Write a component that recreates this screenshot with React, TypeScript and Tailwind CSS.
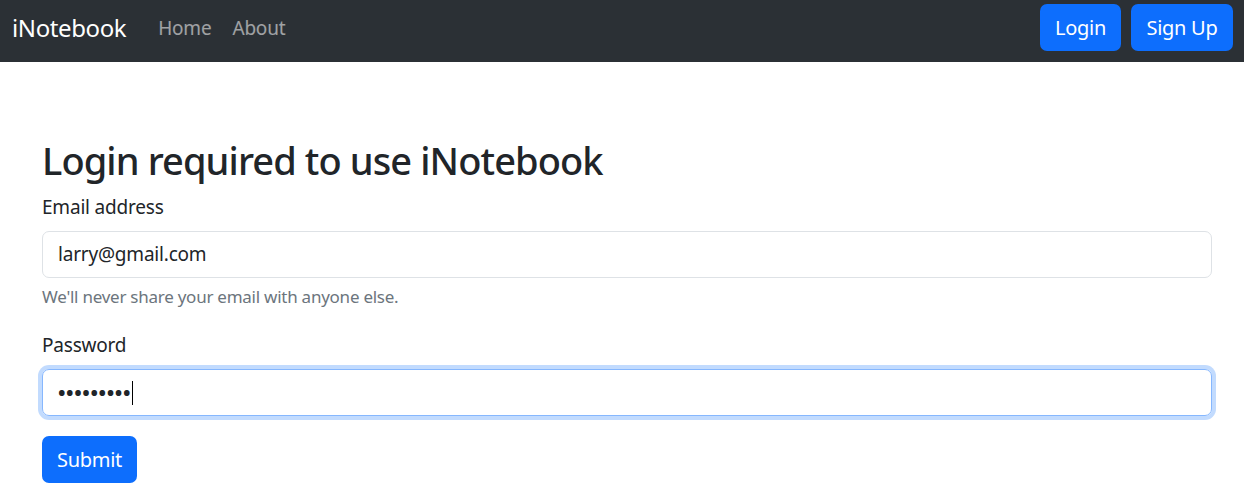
export default function App() {
  const font = { fontFamily: '"Noto Sans", "Open Sans", sans-serif' };

  return (
    <div className="min-h-[491px] bg-white text-[#212529]" style={font}>
      <nav className="flex items-center justify-between bg-[#2b3035] pl-3 pr-[11px] pt-1 pb-[11px]">
        <div className="flex items-center">
          <a href="#" className="text-[24px] leading-[47px] text-white tracking-[-0.4px]">
            iNotebook
          </a>
          <ul className="ml-[32px] flex items-center gap-[21px] pt-[2px]">
            <li>
              <a href="#" className="text-[19px] text-white/55 tracking-[-0.2px]">Home</a>
            </li>
            <li>
              <a href="#" className="text-[19px] text-white/55 tracking-[-0.2px]">About</a>
            </li>
          </ul>
        </div>
        <div className="flex items-center gap-[10px]">
          <button className="h-[47px] w-[81px] rounded-[7px] bg-[#0d6efd] text-[20px] text-white tracking-[-0.3px]">
            Login
          </button>
          <button className="h-[47px] w-[102px] rounded-[7px] bg-[#0d6efd] text-[20px] text-white tracking-[-0.3px]">
            Sign Up
          </button>
        </div>
      </nav>

      <div className="ml-[42px] mr-[32px] mt-[76px]">
        <h2 className="mb-[10px] text-[38px] font-medium leading-[44px] tracking-[-0.9px]">
          Login required to use iNotebook
        </h2>
        <form>
          <div className="mb-5">
            <label className="mb-[9px] block text-[19px] leading-[30px] tracking-[-0.2px]">Email address</label>
            <div className="flex h-[47px] items-center rounded-[7px] border border-[#dee2e6] px-[15px] text-[19px] tracking-[-0.2px]">
              larry@gmail.com
            </div>
            <div className="mt-[6px] text-[17px] leading-[26px] text-[#6c757d] tracking-[-0.25px]">
              We'll never share your email with anyone else.
            </div>
          </div>
          <div className="mb-5">
            <label className="mb-[9px] block text-[19px] leading-[30px] tracking-[-0.2px]">Password</label>
            <div className="flex h-[47px] items-center rounded-[7px] border border-[#86b7fe] px-[15px] shadow-[0_0_0_4px_rgba(13,110,253,0.25)]">
              <span className="text-[20px] font-bold tracking-[0.6px] leading-none">•••••••••</span>
              <span className="ml-[1px] h-[24px] w-px bg-black" />
            </div>
          </div>
          <button type="button" className="h-[47px] w-[95px] rounded-[7px] bg-[#0d6efd] text-[20px] text-white tracking-[-0.3px]">
            Submit
          </button>
        </form>
      </div>
    </div>
  );
}
